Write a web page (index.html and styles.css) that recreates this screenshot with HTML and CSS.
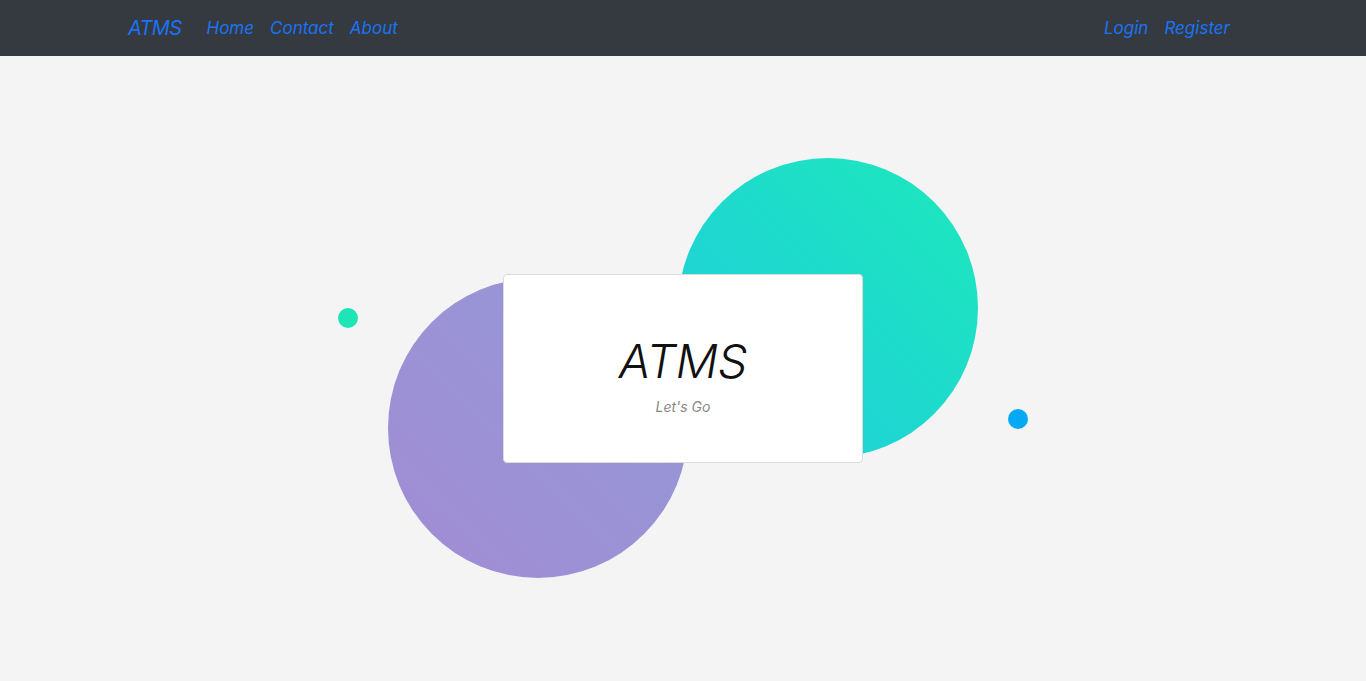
FILE: index.html
```html
<!DOCTYPE html>
<html lang="en">
<head>
<meta charset="utf-8">
<title>ATMS</title>
<link rel="stylesheet" href="styles.css">
</head>
<body>
<nav class="navbar">
  <div class="container">
    <div class="nav-left">
      <a class="brand" href="#">ATMS</a>
      <a class="nav-link" href="#">Home</a>
      <a class="nav-link" href="#">Contact</a>
      <a class="nav-link" href="#">About</a>
    </div>
    <div class="nav-right">
      <a class="nav-link" href="#">Login</a>
      <a class="nav-link" href="#">Register</a>
    </div>
  </div>
</nav>
<main class="hero">
  <div class="stage">
    <span class="circle circle-teal"></span>
    <span class="circle circle-purple"></span>
    <span class="dot dot-green"></span>
    <span class="dot dot-blue"></span>
    <div class="card">
      <h1 class="card-title">ATMS</h1>
      <p class="card-sub">Let's Go</p>
    </div>
  </div>
</main>
</body>
</html>
```
FILE: styles.css
```css
* { box-sizing: border-box; }
html, body { margin: 0; padding: 0; }
body {
  font-family: "Inter", "Noto Sans", sans-serif;
  font-style: italic;
  background: #f4f4f4;
  height: 681px;
  display: flex;
  flex-direction: column;
}
a { text-decoration: none; }
.navbar {
  background: #343a40;
  height: 56px;
  flex: none;
}
.container {
  width: 1140px;
  margin: 0 auto;
  padding: 0 15px;
  height: 100%;
  display: flex;
  align-items: center;
  justify-content: space-between;
}
.nav-left, .nav-right { display: flex; align-items: center; }
.brand {
  color: #1a73f5;
  font-size: 20px;
  margin-right: 17px;
  letter-spacing: -0.6px;
  margin-top: -1px;
}
.nav-link {
  color: #1a73f5;
  font-size: 17px;
  padding: 0 8px;
  margin-top: -1px;
}
.hero {
  flex: 1;
  display: flex;
  align-items: center;
  justify-content: center;
}
.stage {
  position: relative;
  width: 360px;
  height: 189px;
}
.circle {
  position: absolute;
  width: 300px;
  height: 300px;
  border-radius: 50%;
}
.circle-teal {
  left: 175px;
  top: -116px;
  background: linear-gradient(to right top, #20ccdf, #1ce8bb);
}
.circle-purple {
  left: -115px;
  top: 4px;
  background: linear-gradient(to right top, #a28cd5, #9399d6);
}
.dot {
  position: absolute;
  width: 20px;
  height: 20px;
  border-radius: 50%;
}
.dot-green { left: -165px; top: 34px; background: #1de5b6; }
.dot-blue { left: 505px; top: 135px; background: #03a9f4; }
.card {
  position: relative;
  width: 360px;
  height: 189px;
  background: #fff;
  border: 1px solid #dcdcdc;
  border-radius: 4px;
  padding-top: 62px;
  text-align: center;
}
.card-title {
  margin: 0;
  font-size: 47px;
  font-weight: 300;
  color: #111;
  line-height: 1;
  letter-spacing: -0.3px;
}
.card-sub {
  margin: 16px 0 0;
  font-size: 14px;
  color: #888;
  line-height: 1;
}
```
